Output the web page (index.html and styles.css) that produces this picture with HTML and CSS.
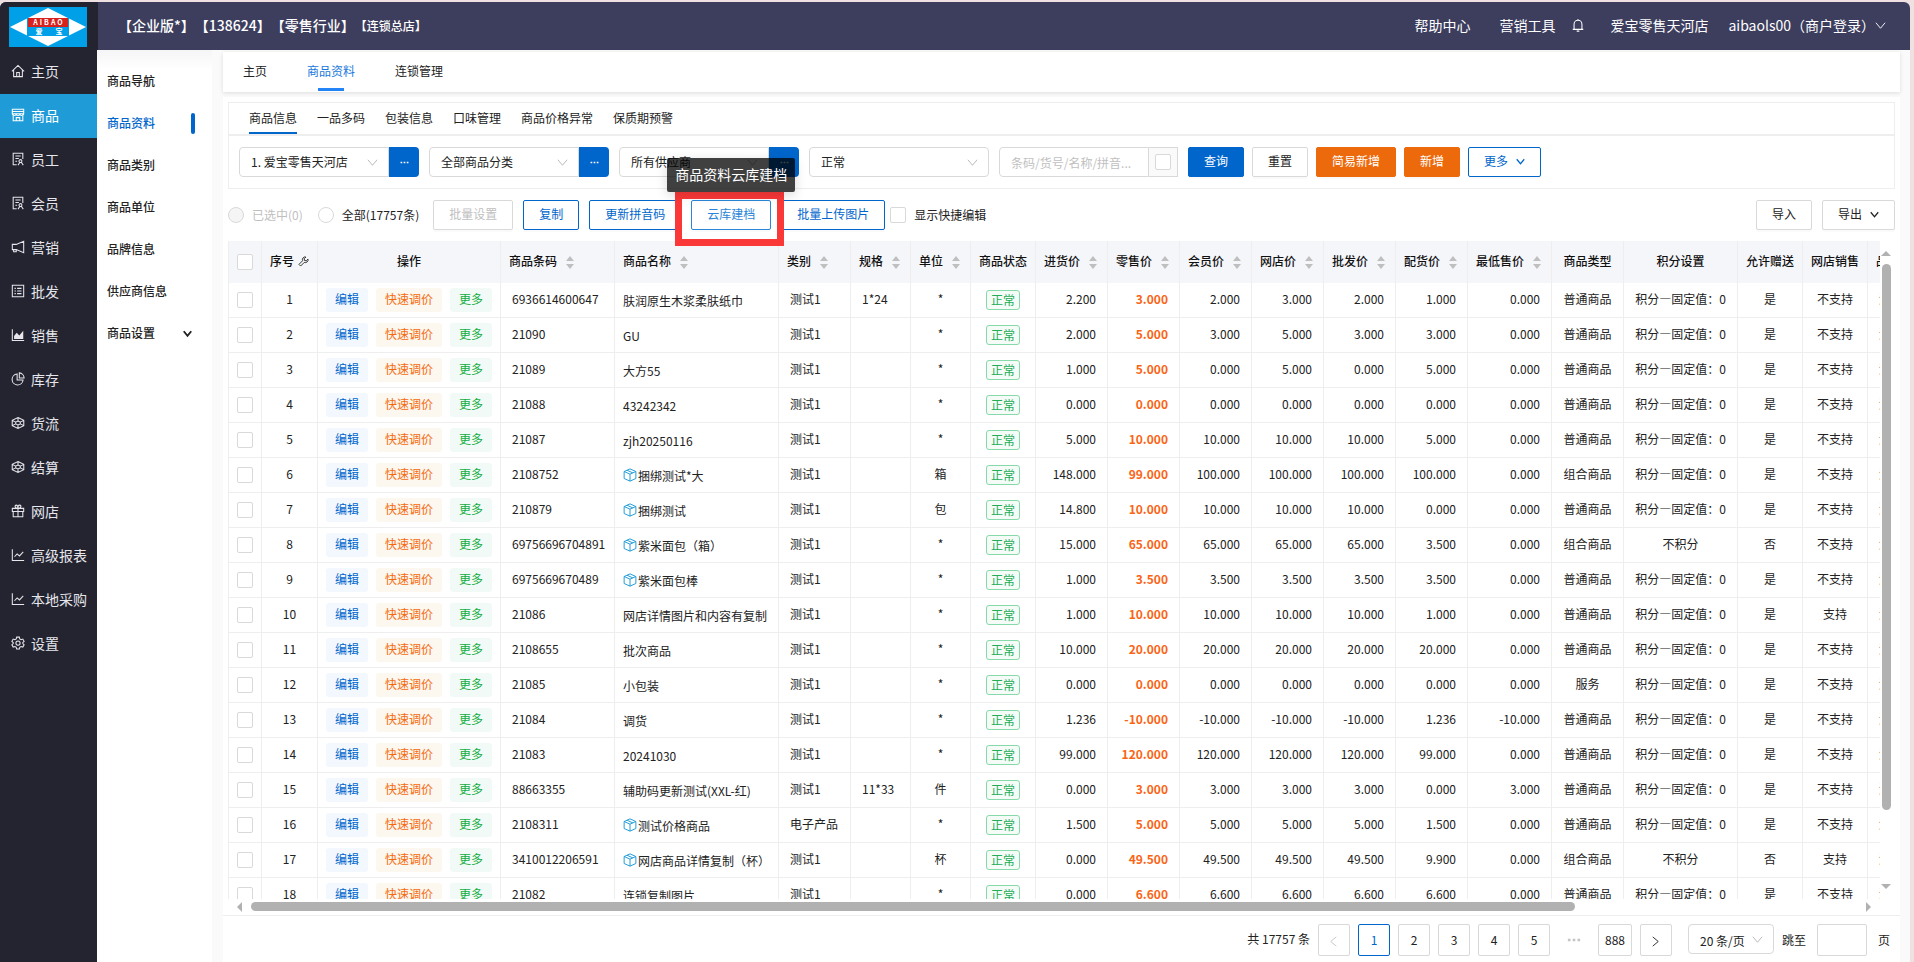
FILE: index.html
```html
<!DOCTYPE html>
<html lang="zh-CN">
<head>
  <meta charset="UTF-8">
  <title>商品资料</title>
  <link rel="stylesheet" href="styles.css">
</head>
<body>

  <!-- 图标 -->
  <svg class="sprite" aria-hidden="true">
    <symbol id="i-home" viewBox="0 0 16 16"><path d="M1 8.5 8 1.6l7 6.9M3 7v7.4h10V7M6.5 14.400V9.800h3v4.600"/></symbol>
    <symbol id="i-shop" viewBox="0 0 16 16"><path d="M1.500 1.500h13v5h-13zM1.500 4h13M2.500 6.500v8h11v-8M1.500 6.500q0 2 2.200 2t2.200-2q0 2 2.100 2t2.100-2q0 2 2.200 2t2.200-2M6 14.500V11h4v3.500"/></symbol>
    <symbol id="i-staff" viewBox="0 0 16 16"><path d="M6.500 14.500h-4v-13h11V8M5 4.500h6M5 7.500h4M5 10.500h2M10.800 8.700a1.700 1.700 0 1 1 0 3.400a1.700 1.700 0 1 1 0-3.400M8 15l2-3M14 15l-2-3"/></symbol>
    <symbol id="i-horn" viewBox="0 0 16 16"><path d="M14.500 1.500v13L6 11H1.500V5H6zM3 11v2.500h3V11"/></symbol>
    <symbol id="i-list" viewBox="0 0 16 16"><path d="M1.500 1.500h13v13h-13zM4 5h1.500M7 5h5M4 8h1.500M7 8h5M4 11h1.500M7 11h5"/></symbol>
    <symbol id="i-area" viewBox="0 0 16 16"><path d="M1.500 1.500v12.800h13.500"/><path class="fill" d="M3.500 12.500V9L6.500 5.500l3 3L14 3v9.500z"/></symbol>
    <symbol id="i-pie" viewBox="0 0 16 16"><path d="M7 2.200a6.300 6.300 0 1 0 6.800 7H7zM9.500 1v5.800H15A6 6 0 0 0 9.500 1z"/></symbol>
    <symbol id="i-cube" viewBox="0 0 16 16"><path d="M8 1.800 14.600 5v6L8 14.200 1.400 11V5zM8 1.800v4M8 10.200v4M1.400 5l4 2M14.600 5l-4 2M1.400 11l4-2M14.600 11l-4-2M8 5.800l2.600 1.200v2L8 10.200 5.400 9V7z"/></symbol>
    <symbol id="i-gift" viewBox="0 0 16 16"><path d="M1.500 5h13v3.500h-13zM2.500 8.500v6h11v-6M8 5v9.500M8 5C4 5 4 1.300 6 1.300S8 3.500 8 5c0-1.500 0-3.700 2-3.700S12 5 8 5"/></symbol>
    <symbol id="i-line" viewBox="0 0 16 16"><path d="M1.500 1.500v12.800h13.500M4 10l3-3.300 2.700 2.400L14 4.500"/></symbol>
    <symbol id="i-gear" viewBox="0 0 16 16"><path d="M6.500 1.300h3l.5 2 1.500.9 2-.7 1.500 2.600L13.500 7.500v1.200L15 10l-1.500 2.600-2-.6-1.500.9-.5 2h-3l-.5-2-1.500-.9-2 .6L1 10l1.500-1.300V7.500L1 6.100l1.500-2.600 2 .7L6 3.300zM8 5.700a2.400 2.400 0 1 1 0 4.800a2.400 2.400 0 1 1 0-4.800"/></symbol>
    <symbol id="i-down" viewBox="0 0 12 12"><path d="M1 3l5 6 5-6"/></symbol>
    <symbol id="i-left" viewBox="0 0 12 12"><path d="M9 1 3 6l6 5"/></symbol>
    <symbol id="i-right" viewBox="0 0 12 12"><path d="M3 1l6 5-6 5"/></symbol>
    <symbol id="i-dots" viewBox="0 0 16 16"><path class="fill" d="M1 6.500h3v3H1zM6.500 6.500h3v3h-3zM12 6.500h3v3h-3z"/></symbol>
    <symbol id="i-bell" viewBox="0 0 16 16"><path d="M2 13h12M3.500 13V7a4.500 4.500 0 0 1 9 0v6M8 2.500V1M6.500 15h3"/></symbol>
    <symbol id="i-wrench" viewBox="0 0 16 16"><path d="M11.500 1.500a4 4 0 0 0-4.800 5.400L1.400 12.200l2.400 2.400 5.300-5.300a4 4 0 0 0 5.400-4.800L12 7 9.500 6.500 9 4z"/></symbol>
    <symbol id="i-box" viewBox="0 0 16 16"><path d="M8 1l6.700 3v8L8 15l-6.700-3V4zM1.300 4 8 7l6.700-3M8 7v8M4.700 2.600l6.500 3"/></symbol>
  </svg>

  <div class="app">
    <header class="topbar">
      <div class="logo">
        <svg viewBox="0 0 78 40" width="78" height="40">
          <rect width="78" height="40" fill="#00a0e9"/>
          <path d="M39 1 77 20 39 39 1 20z" fill="#fff"/>
          <path d="M18 11h42v18H18z" fill="#00a0e9"/>
          <path d="M19 11h40v9H19z" fill="#d7211d"/>
          <text x="40" y="18" font-size="7" letter-spacing="2">AIBAO</text>
          <text x="30" y="27" font-size="7">爱</text>
          <text x="50" y="27" font-size="7">宝</text>
        </svg>
      </div>
      <div class="shop-info">【企业版*】【138624】【零售行业】<small>【连锁总店】</small></div>
      <nav class="top-links">
        <a href="#">帮助中心</a>
        <a href="#">营销工具</a>
        <svg class="icon bell"><use href="#i-bell"/></svg>
        <a href="#">爱宝零售天河店</a>
        <a href="#" class="user">aibaols00（商户登录）<svg class="icon small"><use href="#i-down"/></svg></a>
      </nav>
    </header>

    <div class="body">
      <nav class="side">
        <a href="#"><svg class="icon"><use href="#i-home"/></svg>主页</a>
        <a href="#" class="active"><svg class="icon"><use href="#i-shop"/></svg>商品</a>
        <a href="#"><svg class="icon"><use href="#i-staff"/></svg>员工</a>
        <a href="#"><svg class="icon"><use href="#i-staff"/></svg>会员</a>
        <a href="#"><svg class="icon"><use href="#i-horn"/></svg>营销</a>
        <a href="#"><svg class="icon"><use href="#i-list"/></svg>批发</a>
        <a href="#"><svg class="icon"><use href="#i-area"/></svg>销售</a>
        <a href="#"><svg class="icon"><use href="#i-pie"/></svg>库存</a>
        <a href="#"><svg class="icon"><use href="#i-cube"/></svg>货流</a>
        <a href="#"><svg class="icon"><use href="#i-cube"/></svg>结算</a>
        <a href="#"><svg class="icon"><use href="#i-gift"/></svg>网店</a>
        <a href="#"><svg class="icon"><use href="#i-line"/></svg>高级报表</a>
        <a href="#"><svg class="icon"><use href="#i-line"/></svg>本地采购</a>
        <a href="#"><svg class="icon"><use href="#i-gear"/></svg>设置</a>
      </nav>

      <nav class="submenu">
        <a href="#">商品导航</a>
        <a href="#" class="active">商品资料</a>
        <a href="#">商品类别</a>
        <a href="#">商品单位</a>
        <a href="#">品牌信息</a>
        <a href="#">供应商信息</a>
        <a href="#">商品设置<svg class="icon small"><use href="#i-down"/></svg></a>
      </nav>

      <main class="main">
        <nav class="page-tabs">
          <a href="#">主页</a>
          <a href="#" class="active">商品资料</a>
          <a href="#">连锁管理</a>
        </nav>

        <div class="panel">
          <section class="card">
            <nav class="card-tabs">
              <a href="#" class="active">商品信息</a>
              <a href="#">一品多码</a>
              <a href="#">包装信息</a>
              <a href="#">口味管理</a>
              <a href="#">商品价格异常</a>
              <a href="#">保质期预警</a>
            </nav>
            <form class="filters">
              <div class="group">
                <span class="select"><select aria-label="门店"><option>1. 爱宝零售天河店</option></select><svg class="icon small"><use href="#i-down"/></svg></span>
                <button type="button" class="dots" aria-label="选择门店"><svg class="icon"><use href="#i-dots"/></svg></button>
              </div>
              <div class="group">
                <span class="select"><select aria-label="商品分类"><option>全部商品分类</option></select><svg class="icon small"><use href="#i-down"/></svg></span>
                <button type="button" class="dots" aria-label="选择分类"><svg class="icon"><use href="#i-dots"/></svg></button>
              </div>
              <div class="group">
                <span class="select"><select aria-label="供应商"><option>所有供应商</option></select><svg class="icon small"><use href="#i-down"/></svg></span>
                <button type="button" class="dots" aria-label="选择供应商"><svg class="icon"><use href="#i-dots"/></svg></button>
              </div>
              <div class="group">
                <span class="select"><select aria-label="状态"><option>正常</option></select><svg class="icon small"><use href="#i-down"/></svg></span>
              </div>
              <div class="search">
                <input type="text" class="keyword" aria-label="关键字" placeholder="条码/货号/名称/拼音...">
                <span class="addon"><input type="checkbox" aria-label="精确查询"></span>
              </div>
              <div class="buttons">
                <button type="button" class="btn primary">查询</button>
                <button type="button" class="btn">重置</button>
                <button type="button" class="btn orange">简易新增</button>
                <button type="button" class="btn orange">新增</button>
                <button type="button" class="btn blue">更多<svg class="icon tiny"><use href="#i-down"/></svg></button>
              </div>
            </form>
          </section>

          <div class="toolbar">
            <label class="muted"><input type="radio" name="range" disabled>已选中(0)</label>
            <label class="all"><input type="radio" name="range">全部(17757条)</label>
            <button type="button" class="btn" disabled>批量设置</button>
            <button type="button" class="btn blue">复制</button>
            <button type="button" class="btn blue">更新拼音码</button>
            <div class="cloud">
              <button type="button" class="btn blue hover">云库建档</button>
              <div class="mark"></div>
              <div class="tooltip" role="tooltip">商品资料云库建档</div>
            </div>
            <button type="button" class="btn blue">批量上传图片</button>
            <label class="quick"><input type="checkbox">显示快捷编辑</label>
            <button type="button" class="btn import">导入</button>
            <button type="button" class="btn">导出<svg class="icon tiny"><use href="#i-down"/></svg></button>
          </div>

          <div class="table-area">
            <div class="table-wrap">
              <table>
                <colgroup id="cols"></colgroup>
                <thead><tr id="head"></tr></thead>
                <tbody id="rows"></tbody>
              </table>
            </div>
            <div class="vscroll"><i class="arrow up"></i><div class="track"><div class="thumb"></div></div><i class="arrow down"></i></div>
            <div class="hscroll"><i class="arrow left"></i><div class="track"><div class="thumb"></div></div><i class="arrow right"></i></div>
          </div>

          <footer class="pager">
            <span class="total">共 17757 条</span>
            <button type="button" class="page" aria-label="上一页" disabled><svg class="icon small"><use href="#i-left"/></svg></button>
            <button type="button" class="page current">1</button>
            <button type="button" class="page">2</button>
            <button type="button" class="page">3</button>
            <button type="button" class="page">4</button>
            <button type="button" class="page">5</button>
            <span class="more"><svg class="icon"><use href="#i-dots"/></svg></span>
            <button type="button" class="page">888</button>
            <button type="button" class="page" aria-label="下一页"><svg class="icon small"><use href="#i-right"/></svg></button>
            <span class="select size"><select aria-label="每页条数"><option>20 条/页</option></select><svg class="icon small"><use href="#i-down"/></svg></span>
            <label class="jump">跳至<input type="text"><span>页</span></label>
          </footer>
        </div>
      </main>
    </div>
  </div>

  <script src="script.js"></script>
</body>
</html>
```
FILE: styles.css
```css
* {
  box-sizing: border-box;
}
body {
  margin: 0;
  padding: 2px 4px 0 0;
  height: 100vh;
  overflow: hidden;
  background: #efe1e2;
  font: 12px/18px "Noto Sans CJK SC", sans-serif;
  color: #222;
}
a {
  color: inherit;
  text-decoration: none;
}
button, input, select {
  font: inherit;
  color: inherit;
  margin: 0;
}
.sprite {
  position: absolute;
  width: 0;
  height: 0;
}
.icon {
  width: 14px;
  height: 14px;
  flex: none;
  fill: none;
  stroke: currentColor;
  stroke-width: 1.2;
}
.icon.small {
  width: 11px;
  height: 11px;
  stroke-width: 1;
}
.icon.tiny {
  width: 9px;
  height: 9px;
  stroke-width: 1.6;
  margin-left: 8px;
}
.fill {
  fill: currentColor;
  stroke: none;
}
.app {
  height: 100%;
  display: flex;
  flex-direction: column;
  border-radius: 6px 6px 0 0;
  overflow: hidden;
  background: #fafafa;
}

/* 顶部 */
.topbar {
  height: 48px;
  flex: none;
  display: flex;
  align-items: center;
  background: #3d3e5e;
  color: #fff;
  font-size: 14px;
}
.logo {
  width: 98px;
  height: 48px;
  padding: 5px 0 0 9px;
  background: #232430;
}
.logo svg {
  display: block;
}
.logo text {
  fill: #fff;
  font-weight: bold;
  text-anchor: middle;
}
.shop-info {
  margin-left: 20px;
  padding-bottom: 2px;
  font-weight: 500;
  text-spacing-trim: space-all;
}
.shop-info small {
  font-size: 12px;
}
.top-links {
  margin-left: auto;
  padding: 0 24px 2px 0;
  display: flex;
  align-items: center;
}
.top-links a {
  margin-left: 29px;
  display: flex;
  align-items: center;
}
.top-links .bell {
  margin: 0 -4px 0 16px;
}
.top-links .user {
  margin-left: 20px;
}

/* 左侧菜单 */
.body {
  flex: 1;
  min-height: 0;
  display: flex;
}
.side {
  width: 97px;
  flex: none;
  background: #232430;
  color: #e6e6ec;
  font-size: 14px;
}
.side a {
  height: 44px;
  padding: 0 0 2px 11px;
  display: flex;
  align-items: center;
  gap: 6px;
  white-space: nowrap;
}
.side .active {
  background: #1f9cd8;
  color: #fff;
}
.submenu {
  width: 115px;
  flex: none;
  padding: 10px 20px 0 10px;
  background: linear-gradient(#f5f5f7, #fff 20px);
  font-weight: 500;
}
.submenu a {
  height: 42px;
  display: flex;
  align-items: center;
  justify-content: space-between;
}
.submenu .icon {
  width: 9px;
  height: 9px;
  stroke-width: 2.5;
}
.submenu .active {
  color: #0066cc;
  margin-right: -3px;
}
.submenu .active::after {
  content: "";
  width: 4px;
  height: 21px;
  border-radius: 2px;
  background: #0066cc;
}

/* 主体 */
.main {
  flex: 1;
  min-width: 0;
  margin: 2px 10px 0 11px;
  display: flex;
  flex-direction: column;
}
.page-tabs {
  height: 40px;
  flex: none;
  padding: 0 20px;
  display: flex;
  gap: 40px;
  background: #fff;
  box-shadow: 0 1px 4px rgba(0, 0, 0, .12);
}
.page-tabs a {
  line-height: 38px;
}
.page-tabs .active {
  color: #1677dd;
  display: flex;
  flex-direction: column;
  align-items: center;
}
.page-tabs .active::after {
  content: "";
  width: 26px;
  height: 3px;
  margin-top: -2px;
  background: #2385f5;
}
.panel {
  flex: 1;
  min-height: 0;
  margin-top: 5px;
  padding: 5px 0 0 5px;
  background: #fff;
  display: flex;
  flex-direction: column;
}
.card {
  flex: none;
  margin-right: 5px;
  border: 1px solid #eee;
}
.card-tabs {
  height: 33px;
  padding: 0 20px;
  display: flex;
  gap: 20px;
  border-bottom: 2px solid #eee;
}
.card-tabs a {
  height: 31px;
  line-height: 29px;
}
.card-tabs .active {
  border-bottom: 2px solid #0066cc;
}
.filters {
  padding: 11px 10px;
  display: flex;
  gap: 10px;
}
.group {
  display: flex;
  width: 180px;
}
.search {
  display: flex;
  width: 179px;
}
.select {
  position: relative;
  flex: 1;
  display: flex;
}
.select select {
  appearance: none;
  width: 100%;
  height: 30px;
  padding: 0 11px;
  border: 1px solid #d9d9d9;
  border-radius: 4px;
  background: #fff;
}
.group .select:not(:last-child) select {
  border-radius: 4px 0 0 4px;
}
.select .icon {
  position: absolute;
  right: 11px;
  top: 10px;
  color: #b5b5b5;
  pointer-events: none;
}
.dots {
  width: 30px;
  padding: 0;
  border: 0;
  border-radius: 0 4px 4px 0;
  background: #0066cc;
  color: #fff;
}
.dots .icon {
  width: 9px;
  height: 9px;
}
.keyword {
  flex: 1;
  min-width: 0;
  height: 30px;
  padding: 0 11px;
  border: 1px solid #d9d9d9;
  border-radius: 4px 0 0 4px;
}
.keyword::placeholder {
  color: #bfbfbf;
}
.addon {
  width: 29px;
  border: 1px solid #d9d9d9;
  border-left: 0;
  background: #fafafa;
  display: flex;
  align-items: center;
  justify-content: center;
}
input[type="checkbox"], input[type="radio"] {
  appearance: none;
  width: 16px;
  height: 16px;
  flex: none;
  border: 1px solid #d9d9d9;
  border-radius: 2px;
  background: #fff;
}
input[type="radio"] {
  border-radius: 50%;
}
input[type="radio"]:disabled {
  background: #f5f5f5;
}
.buttons {
  display: flex;
  gap: 8px;
}
.btn {
  height: 30px;
  padding: 0 15px 2px;
  border: 1px solid #d9d9d9;
  border-radius: 2px;
  background: #fff;
  box-shadow: 0 2px 0 rgba(0, 0, 0, .02);
  white-space: nowrap;
}
.btn:disabled {
  color: #bfbfbf;
}
.btn.primary {
  border-color: #0066cc;
  background: #0066cc;
  color: #fff;
}
.btn.orange {
  border-color: #ed6a0c;
  background: #ed6a0c;
  color: #fff;
}
.btn.blue {
  border-color: #0066cc;
  color: #0066cc;
}
.btn.hover {
  border-color: #2a86d8;
  color: #2a86d8;
}

/* 工具栏 */
.toolbar {
  flex: none;
  margin: 11px 5px 11px 0;
  display: flex;
  align-items: center;
  gap: 10px;
}
.toolbar label {
  display: flex;
  align-items: center;
  gap: 8px;
}
.toolbar .muted {
  color: #bfbfbf;
  margin-right: 5px;
}
.toolbar .all {
  margin-right: 4px;
}
.toolbar .quick {
  margin-left: -5px;
}
.import {
  margin-left: auto;
}
.cloud {
  position: relative;
}
.mark {
  position: absolute;
  inset: -8px -13px -16px -16px;
  border: 7px solid #fb3838;
  z-index: 1;
  pointer-events: none;
}
.tooltip {
  position: absolute;
  left: 50%;
  bottom: 38px;
  transform: translateX(-50%);
  padding: 6px 8px 8px;
  border-radius: 2px;
  background: rgba(0, 0, 0, .75);
  box-shadow: 0 3px 12px rgba(0, 0, 0, .15);
  color: #fff;
  font-size: 14px;
  line-height: 20px;
  white-space: nowrap;
  z-index: 2;
}

/* 表格 */
.table-area {
  flex: 1;
  min-height: 0;
  padding-right: 8px;
  display: grid;
  grid-template-columns: 1fr 12px;
  grid-template-rows: 1fr 16px;
}
.table-wrap {
  overflow: hidden;
  border-left: 1px solid #eee;
}
table {
  width: 1900px;
  table-layout: fixed;
  border-collapse: separate;
  border-spacing: 0;
}
th, td {
  height: 35px;
  padding: 0 11px 2px;
  border-right: 1px solid #eee;
  border-bottom: 1px solid #eee;
  text-align: left;
  white-space: nowrap;
}
th {
  height: 42px;
  padding: 0 8px 2px;
  border-bottom: 0;
  background: #f5f6fa;
  font-weight: 500;
  color: #111;
}
.center {
  padding: 0 0 2px;
  text-align: center;
}
.mid {
  padding: 0;
  text-align: center;
}
.num {
  text-align: right;
}
.price {
  color: #fa6414;
  font-weight: bold;
}
.name {
  padding: 2px 0 0 8px;
}
.name .icon {
  margin-right: 1px;
  vertical-align: -1px;
  color: #1c9ad6;
  stroke-width: 1.1;
}
.head {
  display: flex;
  align-items: center;
}
.head .icon {
  width: 11px;
  height: 11px;
  margin-left: 4px;
}
.mid input {
  display: block;
  margin: 0 auto;
}
.sort {
  display: flex;
  flex-direction: column;
  gap: 3px;
  margin: 2px 0 0 9px;
}
.sort::before, .sort::after {
  content: "";
  border: 4px solid transparent;
  border-bottom: 5px solid #bfbfbf;
  border-top: 0;
}
.sort::after {
  border-top: 5px solid #bfbfbf;
  border-bottom: 0;
}
.ops {
  display: flex;
  gap: 8px;
  padding-left: 8px;
}
.ops button {
  height: 24px;
  padding: 0 9px 2px;
  border: 0;
  border-radius: 3px;
  background: #f2f8fe;
  color: #0066cc;
}
.ops .adjust {
  background: #fcf7ef;
  color: #f56a0d;
}
.ops .extra {
  background: #f1faf6;
  color: #15ad43;
}
.tag {
  display: inline-block;
  padding: 0 4px;
  border: 1px solid #86d9a8;
  border-radius: 3px;
  background: #f5fcf8;
  color: #22ac55;
}

/* 滚动条 */
.vscroll {
  display: flex;
  flex-direction: column;
  align-items: center;
  padding: 10px 0;
}
.vscroll .track {
  flex: 1;
  padding-top: 8px;
}
.vscroll .thumb {
  width: 9px;
  height: 88%;
  border-radius: 5px;
  background: #b1b1b1;
}
.hscroll {
  display: flex;
  align-items: center;
  padding: 0 9px 1px;
}
.hscroll .track {
  flex: 1;
  padding-left: 9px;
}
.hscroll .thumb {
  width: 82%;
  height: 9px;
  border-radius: 5px;
  background: #b1b1b1;
}
.arrow {
  border: 5px solid transparent;
}
.arrow.up {
  border-top: 0;
  border-bottom-color: #b1b1b1;
}
.arrow.down {
  border-bottom: 0;
  border-top-color: #b1b1b1;
}
.arrow.left {
  border-left: 0;
  border-right-color: #b1b1b1;
}
.arrow.right {
  border-right: 0;
  border-left-color: #b1b1b1;
}

/* 分页 */
.pager {
  flex: none;
  height: 47px;
  margin-left: -5px;
  padding: 8px 10px 0;
  border-top: 1px solid #eee;
  display: flex;
  justify-content: flex-end;
  align-items: flex-start;
  gap: 8px;
  line-height: 32px;
}
.total {
  line-height: 30px;
}
.more {
  width: 32px;
  text-align: center;
  color: #c4c4c4;
}
.more .icon {
  vertical-align: -2px;
}
.page {
  min-width: 32px;
  height: 32px;
  padding: 0 6px;
  border: 1px solid #d9d9d9;
  border-radius: 2px;
  background: #fff;
  line-height: 30px;
}
.page .icon {
  vertical-align: -2px;
}
.page:disabled {
  color: #c4c4c4;
}
.page.current {
  border-color: #0066cc;
  color: #0066cc;
}
.select.size {
  flex: none;
  width: 86px;
  margin-left: 8px;
}
.jump {
  display: flex;
}
.jump input {
  width: 50px;
  height: 32px;
  margin: 0 11px;
  border: 1px solid #d9d9d9;
  border-radius: 2px;
}
```
FILE: script.js
```js
// 列: [标题, 宽度, 类型]
const columns = [
  ["", 33, "check"], ["序号", 56, "index"], ["操作", 183, "center"],
  ["商品条码", 114, "sort"], ["商品名称", 164, "sort"], ["类别", 72, "sort"],
  ["规格", 60, "sort"], ["单位", 60, "sort"], ["商品状态", 65, "center"],
  ["进货价", 72, "sort"], ["零售价", 72, "sort"], ["会员价", 72, "sort"],
  ["网店价", 72, "sort"], ["批发价", 72, "sort"], ["配货价", 72, "sort"],
  ["最低售价", 84, "sort"], ["商品类型", 72, "center"], ["积分设置", 114, "center"],
  ["允许赠送", 65, "center"], ["网店销售", 65, "center"], ["品牌", 261, ""]
];

const P = "普通商品", Z = "组合商品", F = "积分—固定值：0";

// 条码, 名称, 带图标, 类别, 规格, 单位, 价格x7, 类型, 积分, 赠送, 网店
const goods = [
  ["6936614600647", "肤润原生木浆柔肤纸巾", 0, "测试1", "1*24", "*", "2.200 3.000 2.000 3.000 2.000 1.000 0.000", P, F, "是", "不支持"],
  ["21090", "GU", 0, "测试1", "", "*", "2.000 5.000 3.000 5.000 3.000 3.000 0.000", P, F, "是", "不支持"],
  ["21089", "大方55", 0, "测试1", "", "*", "1.000 5.000 0.000 5.000 0.000 5.000 0.000", P, F, "是", "不支持"],
  ["21088", "43242342", 0, "测试1", "", "*", "0.000 0.000 0.000 0.000 0.000 0.000 0.000", P, F, "是", "不支持"],
  ["21087", "zjh20250116", 0, "测试1", "", "*", "5.000 10.000 10.000 10.000 10.000 5.000 0.000", P, F, "是", "不支持"],
  ["2108752", "捆绑测试*大", 1, "测试1", "", "箱", "148.000 99.000 100.000 100.000 100.000 100.000 0.000", Z, F, "是", "不支持"],
  ["210879", "捆绑测试", 1, "测试1", "", "包", "14.800 10.000 10.000 10.000 10.000 0.000 0.000", P, F, "是", "不支持"],
  ["69756696704891", "紫米面包（箱）", 1, "测试1", "", "*", "15.000 65.000 65.000 65.000 65.000 3.500 0.000", Z, "不积分", "否", "不支持"],
  ["6975669670489", "紫米面包棒", 1, "测试1", "", "*", "1.000 3.500 3.500 3.500 3.500 3.500 0.000", P, F, "是", "不支持"],
  ["21086", "网店详情图片和内容有复制", 0, "测试1", "", "*", "1.000 10.000 10.000 10.000 10.000 1.000 0.000", P, F, "是", "支持"],
  ["2108655", "批次商品", 0, "测试1", "", "*", "10.000 20.000 20.000 20.000 20.000 20.000 0.000", P, F, "是", "不支持"],
  ["21085", "小包装", 0, "测试1", "", "*", "0.000 0.000 0.000 0.000 0.000 0.000 0.000", "服务", F, "是", "不支持"],
  ["21084", "调货", 0, "测试1", "", "*", "1.236 -10.000 -10.000 -10.000 -10.000 1.236 -10.000", P, F, "是", "不支持"],
  ["21083", "20241030", 0, "测试1", "", "*", "99.000 120.000 120.000 120.000 120.000 99.000 0.000", P, F, "是", "不支持"],
  ["88663355", "辅助码更新测试(XXL-红)", 0, "测试1", "11*33", "件", "0.000 3.000 3.000 3.000 3.000 0.000 3.000", P, F, "是", "不支持"],
  ["2108311", "测试价格商品", 1, "电子产品", "", "*", "1.500 5.000 5.000 5.000 5.000 1.500 0.000", P, F, "是", "不支持"],
  ["3410012206591", "网店商品详情复制（杯）", 1, "测试1", "", "杯", "0.000 49.500 49.500 49.500 49.500 9.900 0.000", Z, "不积分", "否", "支持"],
  ["21082", "连锁复制图片", 0, "测试1", "", "*", "0.000 6.600 6.600 6.600 6.600 6.600 0.000", P, F, "是", "不支持"]
];

document.getElementById("cols").innerHTML =
  columns.map(c => `<col style="width:${c[1]}px">`).join("");

document.getElementById("head").innerHTML = columns.map(([title, , type]) => {
  if (type === "check") return `<th class="mid"><input type="checkbox" aria-label="全选"></th>`;
  if (type === "index") return `<th><div class="head">${title}<svg class="icon"><use href="#i-wrench"/></svg></div></th>`;
  if (type === "sort") return `<th><div class="head">${title}<span class="sort"></span></div></th>`;
  return `<th class="${type}">${title}</th>`;
}).join("");

document.getElementById("rows").innerHTML = goods.map((g, i) => {
  const [code, name, boxed, cat, spec, unit, prices, kind, points, gift, online] = g;
  const nums = prices.split(" ").map((p, n) => `<td class="num${n === 1 ? " price" : ""}">${p}</td>`).join("");
  return `<tr>
    <td class="mid"><input type="checkbox" aria-label="选择${code}"></td>
    <td class="center">${i + 1}</td>
    <td class="mid"><div class="ops"><button>编辑</button><button class="adjust">快速调价</button><button class="extra">更多</button></div></td>
    <td>${code}</td>
    <td class="name">${boxed ? '<svg class="icon"><use href="#i-box"/></svg>' : ""}${name}</td>
    <td>${cat}</td>
    <td>${spec}</td>
    <td class="center">${unit}</td>
    <td class="mid"><span class="tag">正常</span></td>
    ${nums}
    <td class="center">${kind}</td>
    <td class="center">${points}</td>
    <td class="center">${gift}</td>
    <td class="center">${online}</td>
    <td>测试1</td>
  </tr>`;
}).join("");
```
